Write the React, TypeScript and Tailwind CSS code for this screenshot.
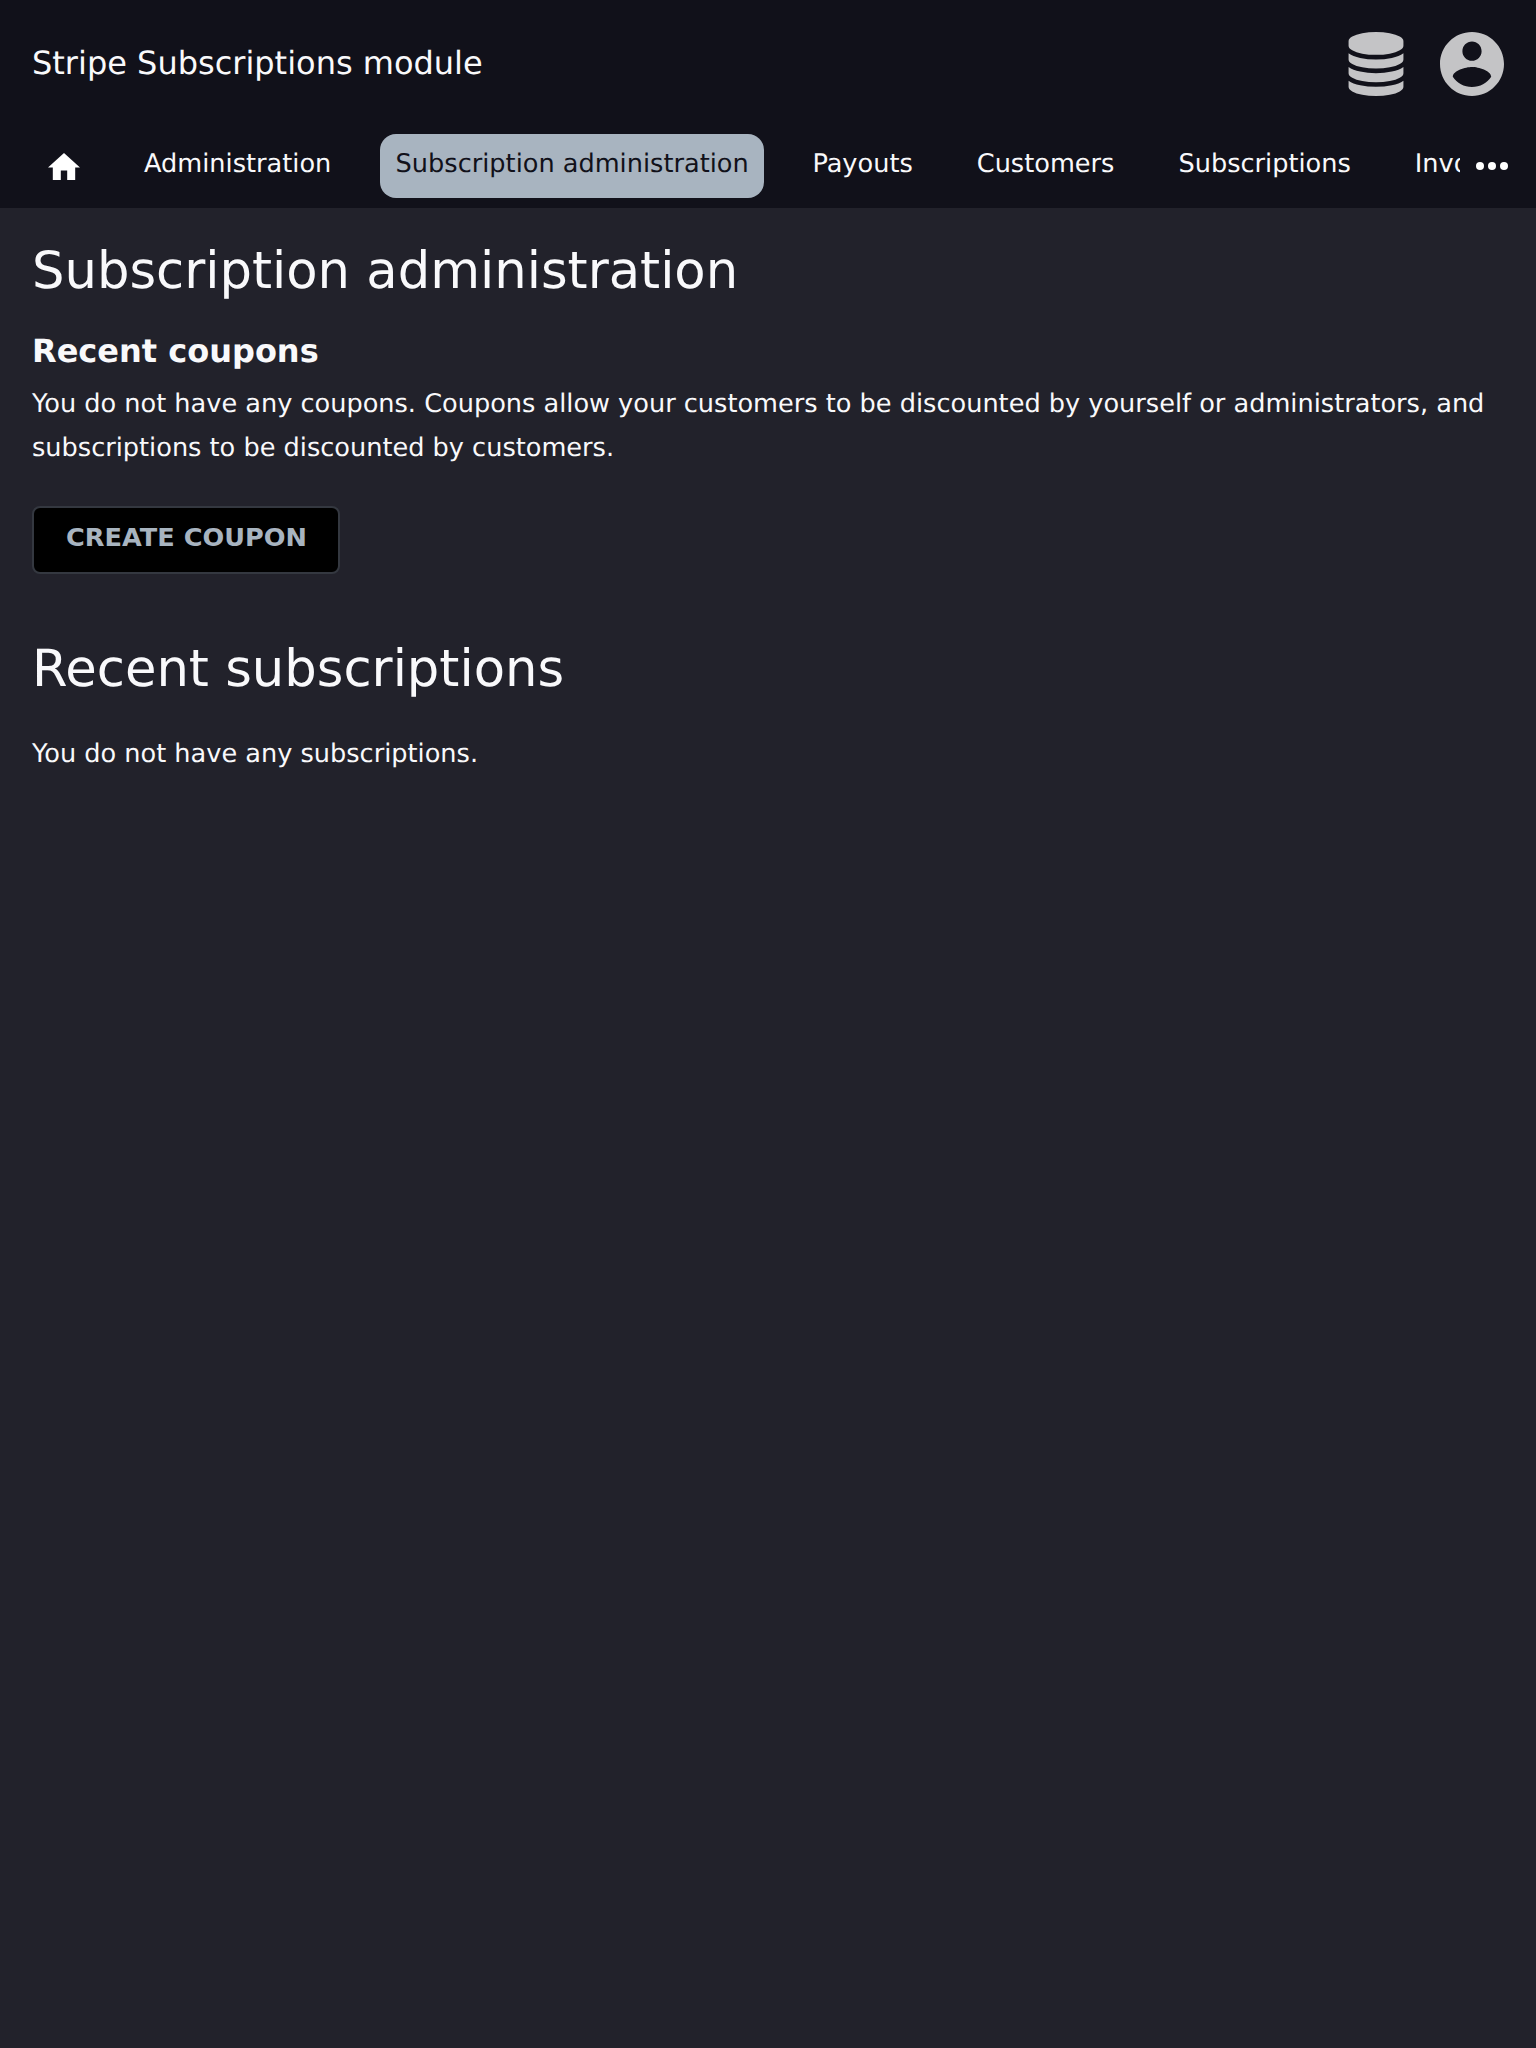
import React from "react";

const tabs = ["Administration", "Subscription administration", "Payouts", "Customers", "Subscriptions", "Invoices"];

function tabClass(tab: string) {
  if (tab === "Subscription administration") {
    return "flex h-16 w-[384.4px] shrink-0 items-center whitespace-nowrap rounded-2xl bg-[#a8b4c0] pb-1 pl-[15.6px] text-[#11111a]";
  }
  if (tab === "Administration") {
    return "flex h-16 w-[220px] shrink-0 items-center whitespace-nowrap pb-1 pl-4";
  }
  return "flex h-16 shrink-0 items-center whitespace-nowrap px-4 pb-1";
}

function DatabaseIcon() {
  return (
    <svg viewBox="0 0 1536 1792" className="h-16 w-14" fill="currentColor">
      <path d="M768 768q237 0 443-43t325-127v170q0 69-103 128t-280 93.5-385 34.5-385-34.5-280-93.5-103-128v-170q119 84 325 127t443 43zm0 768q237 0 443-43t325-127v170q0 69-103 128t-280 93.5-385 34.5-385-34.5-280-93.5-103-128v-170q119 84 325 127t443 43zm0-384q237 0 443-43t325-127v170q0 69-103 128t-280 93.5-385 34.5-385-34.5-280-93.5-103-128v-170q119 84 325 127t443 43zm0-1152q208 0 385 34.5t280 93.5 103 128v128q0 69-103 128t-280 93.5-385 34.5-385-34.5-280-93.5-103-128v-128q0-69 103-128t280-93.5 385-34.5z" />
    </svg>
  );
}

function AccountIcon() {
  return (
    <svg viewBox="2 2 20 20" className="size-16" fill="currentColor">
      <path d="M12 2C6.48 2 2 6.48 2 12s4.48 10 10 10 10-4.48 10-10S17.52 2 12 2zm0 3c1.66 0 3 1.34 3 3s-1.34 3-3 3-3-1.34-3-3 1.34-3 3-3zm0 14.2c-2.5 0-4.71-1.28-6-3.22.03-1.99 4-3.08 6-3.08 1.99 0 5.97 1.09 6 3.08-1.29 1.94-3.5 3.22-6 3.22z" />
    </svg>
  );
}

export default function App() {
  return (
    <div className="min-h-screen bg-[#22222b] font-['DejaVu_Sans',sans-serif] text-[25.6px] leading-[44px] text-[#f9f9fb] [text-rendering:geometricPrecision]">
      <header className="h-52 bg-[#11111a]">
        <div className="flex h-32 items-center justify-between px-8">
          <div className="pb-0.5 text-[32px] leading-10">Stripe Subscriptions module</div>
          <div className="flex gap-9 text-[#c4c4c6]">
            <DatabaseIcon />
            <AccountIcon />
          </div>
        </div>
        <div className="flex pt-1.5">
          <nav className="flex w-[1460px] gap-8 overflow-hidden pl-8">
            <a className="flex size-16 shrink-0 items-center justify-center pt-px text-white">
              <svg viewBox="2 3 20 17" className="h-[27.2px] w-8" fill="currentColor">
                <path d="M10 20v-6h4v6h5v-8h3L12 3 2 12h3v8z" />
              </svg>
            </a>
            {tabs.map((tab) => (
              <a key={tab} className={tabClass(tab)}>
                {tab}
              </a>
            ))}
          </nav>
          <button className="flex h-16 items-center pl-4 text-white">
            <svg viewBox="4 10 16 4" className="h-2 w-8" fill="currentColor">
              <circle cx="6" cy="12" r="2" />
              <circle cx="12" cy="12" r="2" />
              <circle cx="18" cy="12" r="2" />
            </svg>
          </button>
        </div>
      </header>
      <main className="px-8 pt-[31px]">
        <h1 className="text-[51.2px] leading-[64px]">Subscription administration</h1>
        <h2 className="mt-7 text-[32px] font-bold leading-10">Recent coupons</h2>
        <p className="mt-[11px]">
          You do not have any coupons. Coupons allow your customers to be discounted by yourself or administrators, and
          subscriptions to be discounted by customers.
        </p>
        <button className="mt-9 flex h-[68px] w-[308px] items-center whitespace-nowrap rounded-lg border-2 border-[#343840] bg-black pb-1.5 pl-8 font-bold text-[#a8b4c0]">
          CREATE COUPON
        </button>
        <h1 className="mt-[63px] text-[51.2px] leading-[64px]">Recent subscriptions</h1>
        <p className="mt-[31px]">You do not have any subscriptions.</p>
      </main>
    </div>
  );
}
